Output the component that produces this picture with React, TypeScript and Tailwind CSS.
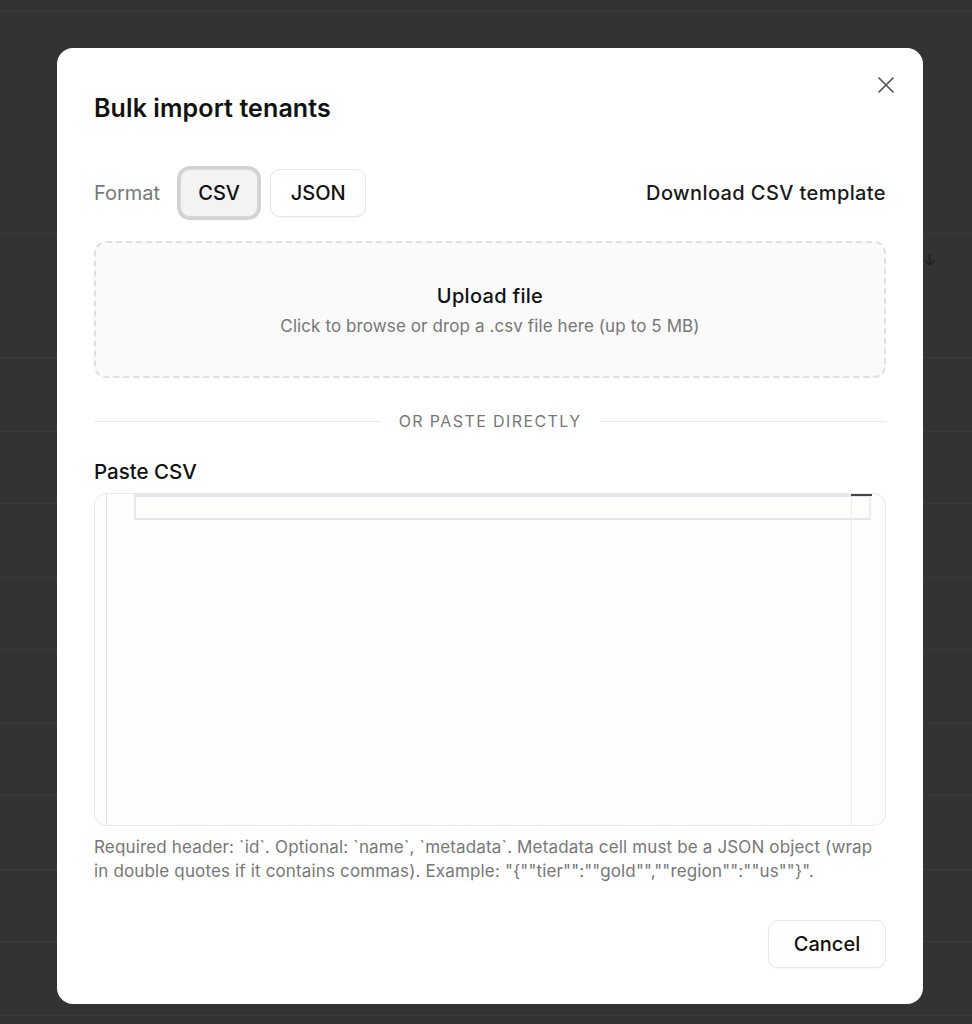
import React from "react";
import { X } from "lucide-react";

const rowHeights = [74, 72, 74, 72, 74, 72, 74, 72, 74, 72];

const helpText =
  'Required header: `id`. Optional: `name`, `metadata`. Metadata cell must be a JSON object (wrap in double quotes if it contains commas). Example: "{""tier"":""gold"",""region"":""us""}".';

export default function App() {
  return (
    <div
      className="relative h-[1024px] w-full overflow-hidden bg-[#333333]"
      style={{ fontFamily: "Inter, 'Noto Sans', sans-serif" }}
    >
      {/* Dimmed page behind the dialog */}
      <div className="flex flex-col">
        <div className="h-[12px] border-b border-[#3b3b3b]" />
        <div className="h-[222px] border-b border-[#3b3b3b]" />
        <div className="flex h-[124px] items-start justify-end border-b border-[#3b3b3b] pr-[36px] pt-[14px]">
          <span className="text-[16px] text-[#1e1e1e]">↓</span>
        </div>
        {rowHeights.map((h, i) => (
          <div key={i} className="border-b border-[#3b3b3b]" style={{ height: h }} />
        ))}
      </div>

      {/* Dialog */}
      <div className="absolute left-[57px] top-[48px] w-[866px] rounded-[16px] bg-white px-[37px] pb-[36px] pt-[44px]">
        <button className="absolute right-[23px] top-[23px] text-[#555]">
          <X className="h-[28px] w-[28px]" strokeWidth={1.5} />
        </button>

        <h2 className="text-[25px] font-semibold leading-[32px] tracking-[0.1px] text-[#111]">
          Bulk import tenants
        </h2>

        <div className="mt-[42px] flex h-[54px] items-center justify-between">
          <div className="flex items-center">
            <span className="mr-[20px] text-[20px] text-[#777]">Format</span>
            <button className="h-[48px] w-[78px] rounded-[10px] border border-[#d9d9d9] bg-[#f3f3f3] text-[20px] font-medium text-[#111] ring-[3px] ring-[#d2d2d2]">
              CSV
            </button>
            <button className="ml-[12px] h-[48px] w-[96px] rounded-[10px] border border-[#e6e6e6] bg-white text-[20px] font-medium text-[#111] shadow-[0_1px_2px_rgba(0,0,0,0.04)]">
              JSON
            </button>
          </div>
          <button className="text-[20px] font-medium tracking-[0.4px] text-[#1a1a1a]">Download CSV template</button>
        </div>

        <div className="mt-[21px] flex h-[137px] flex-col items-center justify-center rounded-[12px] border-2 border-dashed border-[#e0e0e0] bg-[#fafafa]">
          <div className="text-[20px] font-medium leading-[28px] tracking-[0.3px] text-[#111]">Upload file</div>
          <div className="mt-[4px] text-[17px] leading-[24px] tracking-[0.1px] text-[#777]">
            Click to browse or drop a .csv file here (up to 5 MB)
          </div>
        </div>

        <div className="mt-[31px] flex items-center gap-[19px]">
          <div className="h-px flex-1 bg-[#e8e8e8]" />
          <span className="text-[16px] leading-[24px] tracking-[1.4px] text-[#777]">OR PASTE DIRECTLY</span>
          <div className="h-px flex-1 bg-[#e8e8e8]" />
        </div>

        <div className="mt-[25px] text-[20.5px] font-medium leading-[28px] text-[#111]">Paste CSV</div>

        <div className="relative mt-[7px] flex h-[333px] overflow-hidden rounded-[12px] border border-[#e8e8e8] bg-[#fdfdfb]">
          <div className="w-[12px] shrink-0 border-r border-[#dde3ea]" />
          <div className="flex-1 pl-[27px]">
            <div className="h-[26px] border-2 border-t-[3px] border-[#e6e7ea] border-r-[#ececec]" style={{ marginRight: -20 }} />
          </div>
          <div className="w-[34px] shrink-0 border-l border-[#ececec]" />
          <div className="absolute right-[13px] top-0 h-[2px] w-[21px] bg-[#444]" />
        </div>

        <p className="mt-[9px] text-[17px] leading-[24px] tracking-[0.15px] text-[#777]">{helpText}</p>

        <div className="mt-[37px] flex justify-end">
          <button className="h-[48px] w-[118px] rounded-[10px] border border-[#e6e6e6] bg-white text-[20px] font-medium text-[#111] shadow-[0_1px_2px_rgba(0,0,0,0.04)]">
            Cancel
          </button>
        </div>
      </div>
    </div>
  );
}
